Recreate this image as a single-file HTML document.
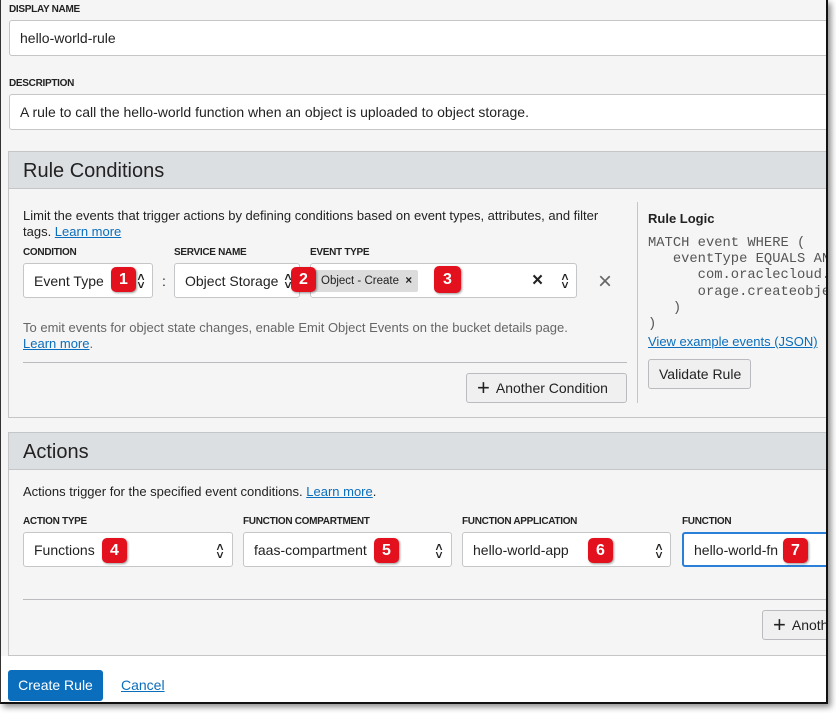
<!DOCTYPE html>
<html><head><style>
*{box-sizing:border-box;margin:0;padding:0}
body{width:836px;height:713px;background:#fff;font-family:"Liberation Sans",sans-serif;color:#222;position:relative;overflow:hidden}
#frame{position:absolute;left:0;top:0;width:828px;height:704px;background:#f5f5f5;border-right:2px solid #111;border-bottom:2px solid #111;border-left:1px solid #333;box-shadow:3px 3px 6px rgba(0,0,0,.45);overflow:hidden}
.a{position:absolute}
.lbl{font-size:10px;font-weight:bold;color:#222;letter-spacing:-.3px}
.inp{position:absolute;background:#fff;border:1px solid #c4c6c8;border-radius:3px;font-size:14px;padding-left:10px;display:flex;align-items:center;color:#222}
.panel{position:absolute;left:7px;width:830px;border:1px solid #c4c6c8;background:#f5f5f5}
.ph{height:37px;background:#dcdfe2;border-bottom:1px solid #c4c6c8;font-size:20px;padding:8px 0 0 14px;color:#222}
.t{font-size:13px;color:#222}
a{color:#0a6ebd;text-decoration:underline}
.badge{position:absolute;width:25px;height:25px;background:#e3101e;border-radius:5px;color:#fff;font-weight:bold;font-size:16px;text-align:center;line-height:25px;box-shadow:1px 1px 2px rgba(0,0,0,.4)}
.chev{position:absolute;font-size:12px;font-weight:bold;line-height:8px;color:#222;text-align:center;width:10px}
.btn{position:absolute;background:#f0f0f0;border:1px solid #b9bbbe;border-radius:3px;font-size:14px;display:flex;align-items:center;color:#222}
.mono{font-family:"Liberation Mono",monospace;font-size:13.8px;color:#555;line-height:16.2px;white-space:pre}
</style></head><body>
<div id="frame">
<div class="a lbl" style="left:8px;top:4px">DISPLAY NAME</div>
<div class="inp" style="left:8px;top:20px;width:830px;height:36px">hello-world-rule</div>
<div class="a lbl" style="left:8px;top:78px">DESCRIPTION</div>
<div class="inp" style="left:8px;top:94px;width:830px;height:36px">A rule to call the hello-world function when an object is uploaded to object storage.</div>

<div class="panel" style="top:151px;height:267px">
<div class="ph">Rule Conditions</div>
</div>
<div class="a t" style="left:22px;top:208px;width:605px;line-height:16px">Limit the events that trigger actions by defining conditions based on event types, attributes, and filter tags. <a>Learn more</a></div>
<div class="a lbl" style="left:22px;top:247px">CONDITION</div>
<div class="a lbl" style="left:173px;top:247px">SERVICE NAME</div>
<div class="a lbl" style="left:309px;top:247px">EVENT TYPE</div>
<div class="inp" style="left:22px;top:263px;width:130px;height:35px">Event Type</div>
<div class="chev" style="left:135px;top:273px">˄<br>˅</div>
<div class="a" style="left:161px;top:273px;font-size:14px">:</div>
<div class="inp" style="left:173px;top:263px;width:126px;height:35px">Object Storage</div>
<div class="chev" style="left:282px;top:273px">˄<br>˅</div>
<div class="inp" style="left:309px;top:263px;width:267px;height:35px;padding-left:2px">
<span style="background:#dcdcdc;font-size:11.5px;padding:5px 6px 5px 8px;border-radius:2px">Object - Create &nbsp;<b>×</b></span></div>
<div class="a" style="left:531px;top:270px;font-size:19px;font-weight:bold">×</div>
<div class="chev" style="left:559px;top:273px">˄<br>˅</div>
<div class="a" style="left:597px;top:268px;font-size:24px;color:#666;font-weight:300">×</div>
<div class="badge" style="left:110px;top:267px">1</div>
<div class="badge" style="left:290px;top:267px">2</div>
<div class="badge" style="left:433px;top:266px;width:27px;height:27px;line-height:27px">3</div>
<div class="a t" style="left:22px;top:320px;color:#666;line-height:16px;width:610px;white-space:nowrap">To emit events for object state changes, enable Emit Object Events on the bucket details page.<br><a>Learn more</a>.</div>
<div class="a" style="left:22px;top:362px;width:604px;height:1px;background:#b9bbbe"></div>
<div class="btn" style="left:465px;top:373px;width:161px;height:30px;padding-left:10px"><span style="font-size:22px;font-weight:300;margin-right:6px;line-height:20px">+</span>Another Condition</div>
<div class="a" style="left:636px;top:202px;width:1px;height:201px;background:#c4c6c8"></div>
<div class="a" style="left:647px;top:211px;font-size:13px;font-weight:bold">Rule Logic</div>
<div class="a mono" style="left:647px;top:236px">MATCH event WHERE (
   eventType EQUALS ANY OF (
      com.oraclecloud.objectst
      orage.createobject
   )
)</div>
<div class="a t" style="left:647px;top:334px;white-space:nowrap"><a>View example events (JSON)</a></div>
<div class="btn" style="left:647px;top:359px;width:103px;height:30px;padding-left:10px">Validate Rule</div>

<div class="panel" style="top:432px;height:224px">
<div class="ph">Actions</div>
</div>
<div class="a t" style="left:22px;top:484px">Actions trigger for the specified event conditions. <a>Learn more</a>.</div>
<div class="a lbl" style="left:22px;top:516px">ACTION TYPE</div>
<div class="a lbl" style="left:242px;top:516px">FUNCTION COMPARTMENT</div>
<div class="a lbl" style="left:461px;top:516px">FUNCTION APPLICATION</div>
<div class="a lbl" style="left:681px;top:516px">FUNCTION</div>
<div class="inp" style="left:22px;top:532px;width:210px;height:35px">Functions</div>
<div class="chev" style="left:214px;top:543px">˄<br>˅</div>
<div class="inp" style="left:242px;top:532px;width:209px;height:35px">faas-compartment</div>
<div class="chev" style="left:433px;top:543px">˄<br>˅</div>
<div class="inp" style="left:461px;top:532px;width:209px;height:35px">hello-world-app</div>
<div class="chev" style="left:653px;top:543px">˄<br>˅</div>
<div class="inp" style="left:681px;top:532px;width:160px;height:35px;border:2px solid #2a7fd8">hello-world-fn</div>
<div class="badge" style="left:101px;top:538px">4</div>
<div class="badge" style="left:373px;top:538px">5</div>
<div class="badge" style="left:587px;top:538px">6</div>
<div class="badge" style="left:782px;top:538px">7</div>
<div class="a" style="left:22px;top:599px;width:810px;height:1px;background:#b9bbbe"></div>
<div class="btn" style="left:761px;top:610px;width:90px;height:30px;padding-left:10px"><span style="font-size:22px;font-weight:300;margin-right:6px;line-height:20px">+</span>Another</div>
<div class="a" style="left:0;top:656px;width:830px;height:50px;background:#fff"></div>
<div class="a" style="left:7px;top:670px;width:95px;height:31px;background:#0a6ebd;border-radius:3px;color:#fff;font-size:14px;text-align:center;line-height:31px">Create Rule</div>
<div class="a" style="left:120px;top:677px;font-size:14px"><a>Cancel</a></div>
</div>
</body></html>
